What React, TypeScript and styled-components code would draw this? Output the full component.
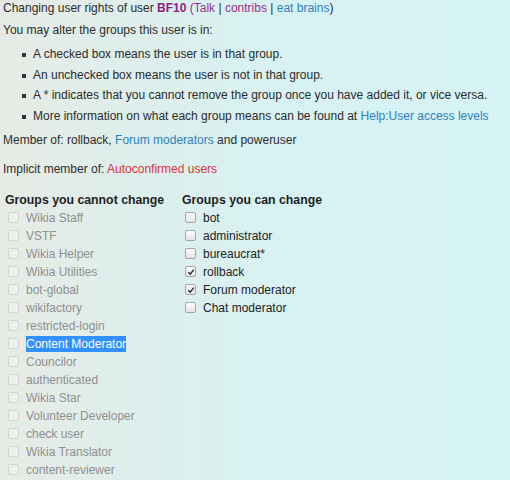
import React from 'react';
import styled, { createGlobalStyle } from 'styled-components';

const GlobalStyle = createGlobalStyle`
  html, body {
    margin: 0;
    padding: 0;
  }
  body {
    width: 510px;
    height: 480px;
    overflow: hidden;
    background: linear-gradient(to right, #e7ebe5 0%, #dcefed 30%, #d7f2f4 60%, #d6f3f6 100%);
    font-family: 'Liberation Sans', Arial, sans-serif;
    font-size: 12px;
    color: #2b2b2b;
  }
`;

const Page = styled.div`
  padding: 0 0 0 3px;
`;

const Line = styled.p<{ $top?: number }>`
  margin: ${(p) => p.$top ?? 0}px 0 0;
  line-height: 16px;
`;

const Link = styled.span<{ $tone: 'blue' | 'purple' | 'red' }>`
  color: ${(p) =>
    p.$tone === 'blue' ? '#2f7fbd' : p.$tone === 'purple' ? '#9a2d8f' : '#d9333a'};
`;

const Strong = styled.b`
  color: #8c1f86;
`;

const Bullets = styled.ul`
  margin: 8px 0 0;
  padding: 0 0 0 30px;
  list-style: none;
`;

const Bullet = styled.li`
  position: relative;
  line-height: 16px;
  margin-bottom: 4.6px;
  &::before {
    content: '';
    position: absolute;
    left: -11px;
    top: 7px;
    width: 4px;
    height: 4px;
    background: #333;
  }
`;

const Columns = styled.div`
  display: flex;
  margin-top: 15px;
  padding-left: 2px;
`;

const Column = styled.div<{ $width?: number }>`
  width: ${(p) => (p.$width ? `${p.$width}px` : 'auto')};
  display: flex;
  flex-direction: column;
`;

const Heading = styled.div`
  font-weight: bold;
  font-size: 12.3px;
  line-height: 16px;
  color: #1e1e1e;
  margin-bottom: 1px;
`;

const Row = styled.label<{ $disabled?: boolean }>`
  display: flex;
  align-items: center;
  height: 18px;
  color: ${(p) => (p.$disabled ? '#8f8f8f' : '#222')};
`;

const Box = styled.span<{ $disabled?: boolean }>`
  box-sizing: border-box;
  width: 11px;
  height: 11px;
  margin: 0 7px 0 3px;
  border: 1px solid ${(p) => (p.$disabled ? '#d4d6d4' : '#a5a5a5')};
  border-radius: 2px;
  background: ${(p) =>
    p.$disabled ? '#eef0ee' : 'linear-gradient(#fdfdfd, #e4e4e4)'};
  display: flex;
  align-items: center;
  justify-content: center;
`;

const Selected = styled.span`
  background: #3390ff;
  color: #fff;
  padding: 1px 0;
`;

const Check = () => (
  <svg width="8" height="8" viewBox="0 0 9 9">
    <path d="M1.5 4.8 L3.6 6.9 L7.6 1.8" stroke="#222" strokeWidth="1.5" fill="none" />
  </svg>
);

const fixed = [
  'Wikia Staff',
  'VSTF',
  'Wikia Helper',
  'Wikia Utilities',
  'bot-global',
  'wikifactory',
  'restricted-login',
  'Content Moderator',
  'Councilor',
  'authenticated',
  'Wikia Star',
  'Volunteer Developer',
  'check user',
  'Wikia Translator',
  'content-reviewer',
];

const changeable = [
  { name: 'bot', on: false },
  { name: 'administrator', on: false },
  { name: 'bureaucrat*', on: false },
  { name: 'rollback', on: true },
  { name: 'Forum moderator', on: true },
  { name: 'Chat moderator', on: false },
];

export default function App() {
  return (
    <Page>
      <GlobalStyle />
      <Line>
        Changing user rights of user <Strong>BF10</Strong>{' '}
        <Link $tone="purple">(</Link>
        <Link $tone="purple">Talk</Link> | <Link $tone="purple">contribs</Link> |{' '}
        <Link $tone="blue">eat brains</Link>)
      </Line>
      <Line $top={6}>You may alter the groups this user is in:</Line>
      <Bullets>
        <Bullet>A checked box means the user is in that group.</Bullet>
        <Bullet>An unchecked box means the user is not in that group.</Bullet>
        <Bullet>A * indicates that you cannot remove the group once you have added it, or vice versa.</Bullet>
        <Bullet>
          More information on what each group means can be found at{' '}
          <Link $tone="blue">Help:User access levels</Link>
        </Bullet>
      </Bullets>
      <Line $top={8}>
        Member of: rollback, <Link $tone="blue">Forum moderators</Link> and poweruser
      </Line>
      <Line $top={13}>
        Implicit member of: <Link $tone="red">Autoconfirmed users</Link>
      </Line>
      <Columns>
        <Column $width={177}>
          <Heading>Groups you cannot change</Heading>
          {fixed.map((g) => (
            <Row key={g} $disabled>
              <Box $disabled />
              {g === 'Content Moderator' ? <Selected>{g}</Selected> : g}
            </Row>
          ))}
        </Column>
        <Column>
          <Heading>Groups you can change</Heading>
          {changeable.map((g) => (
            <Row key={g.name}>
              <Box>{g.on && <Check />}</Box>
              {g.name}
            </Row>
          ))}
        </Column>
      </Columns>
    </Page>
  );
}
